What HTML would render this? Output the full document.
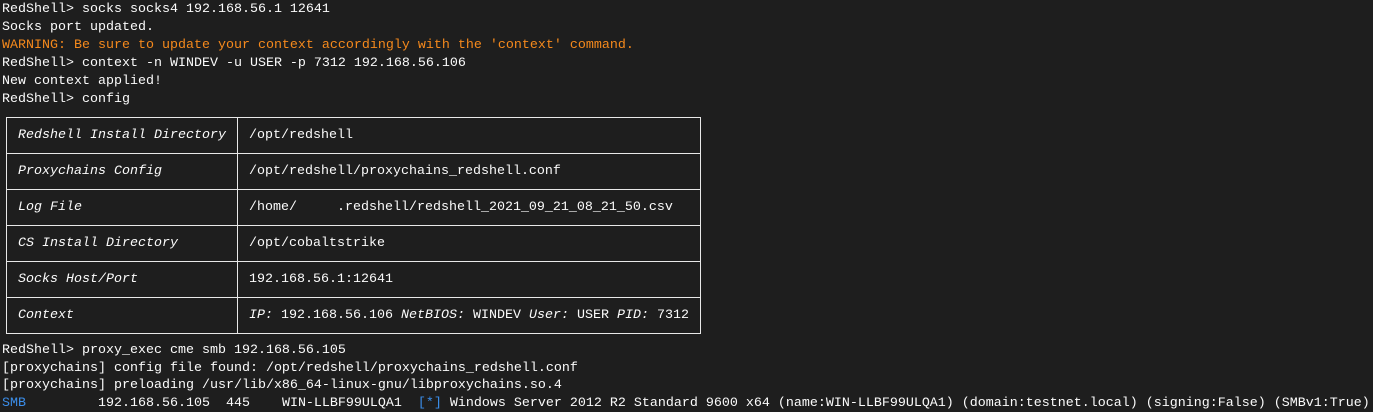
<!DOCTYPE html>
<html><head><style>
body{margin:0;background:#1e1e1e;width:1373px;height:412px;overflow:hidden;font-family:"Liberation Mono",monospace;font-size:13.33px;color:#fbfbfb}
.l{position:absolute;left:2px;white-space:pre;line-height:18px}
.w{color:#f5891c}
.b{color:#3b8eea}
table{position:absolute;left:6px;top:117px;border-collapse:collapse;border:1px solid #e8e8e8}
td{border:1px solid #e8e8e8;height:35px;padding:0 11px;white-space:pre;font-size:13.33px}
td.k{font-style:italic;width:208px}
td.v{width:430px}
i{font-style:italic}
</style></head><body>
<div class="l" style="top:1px">RedShell&gt; socks socks4 192.168.56.1 12641
Socks port updated.
<span class="w">WARNING: Be sure to update your context accordingly with the 'context' command.</span>
RedShell&gt; context -n WINDEV -u USER -p 7312 192.168.56.106
New context applied!
RedShell&gt; config</div>
<table>
<tr><td class="k">Redshell Install Directory</td><td class="v">/opt/redshell</td></tr>
<tr><td class="k">Proxychains Config</td><td class="v">/opt/redshell/proxychains_redshell.conf</td></tr>
<tr><td class="k">Log File</td><td class="v">/home/     .redshell/redshell_2021_09_21_08_21_50.csv</td></tr>
<tr><td class="k">CS Install Directory</td><td class="v">/opt/cobaltstrike</td></tr>
<tr><td class="k">Socks Host/Port</td><td class="v">192.168.56.1:12641</td></tr>
<tr><td class="k">Context</td><td class="v"><i>IP:</i> 192.168.56.106 <i>NetBIOS:</i> WINDEV <i>User:</i> USER <i>PID:</i> 7312</td></tr>
</table>
<div class="l" style="top:342px;line-height:17.5px">RedShell&gt; proxy_exec cme smb 192.168.56.105
[proxychains] config file found: /opt/redshell/proxychains_redshell.conf
[proxychains] preloading /usr/lib/x86_64-linux-gnu/libproxychains.so.4
<span class="b">SMB</span>         192.168.56.105  445    WIN-LLBF99ULQA1  <span class="b">[*]</span> Windows Server 2012 R2 Standard 9600 x64 (name:WIN-LLBF99ULQA1) (domain:testnet.local) (signing:False) (SMBv1:True)</div>
</body></html>
